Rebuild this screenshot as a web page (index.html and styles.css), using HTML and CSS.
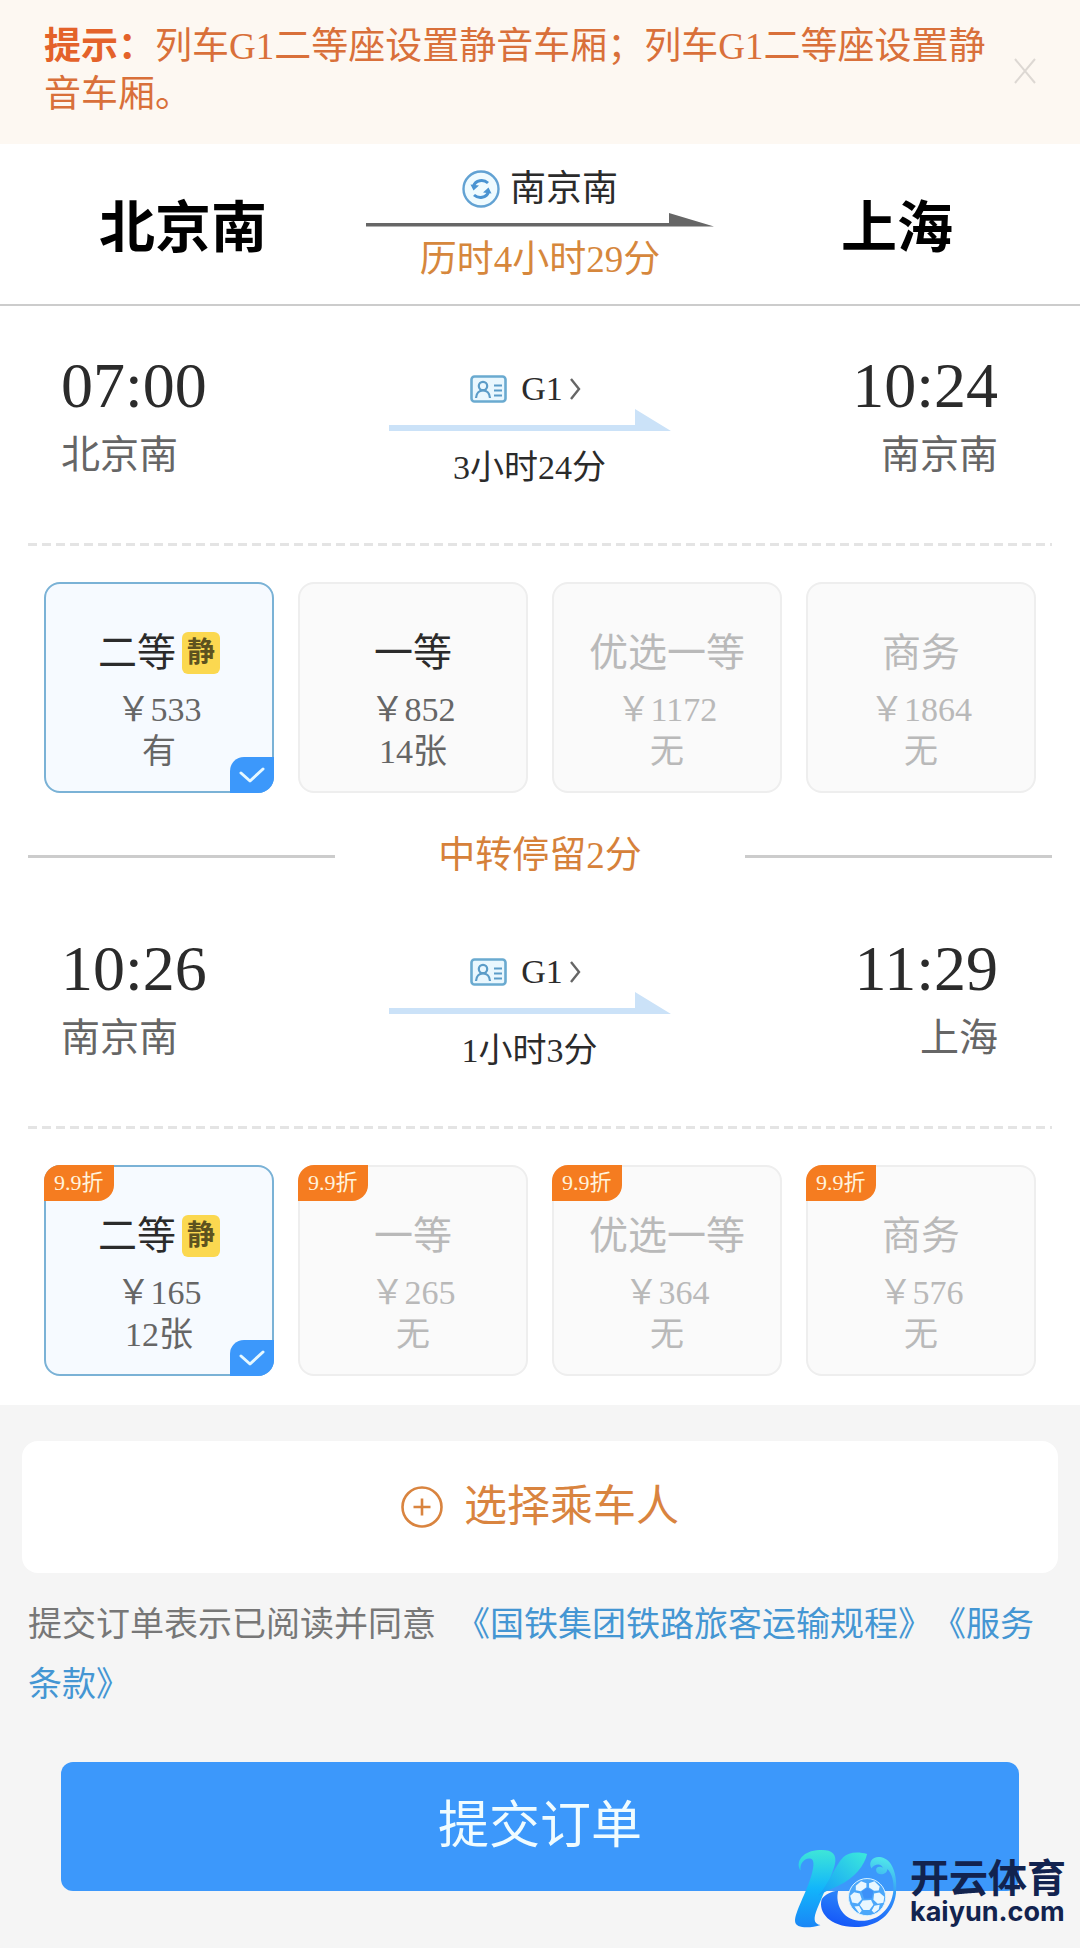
FILE: index.html
```html
<!DOCTYPE html>
<html lang="zh-CN">
<head>
  <meta charset="UTF-8">
  <meta name="viewport" content="width=device-width, initial-scale=1">
  <title>提交订单</title>
  <link rel="stylesheet" href="styles.css">
</head>
<body>
  <!-- shared icons -->
  <svg class="sprite" width="0" height="0">
    <symbol id="id-card" viewBox="0 0 37 28">
      <rect x="1.5" y="1.5" width="34" height="25" rx="3" fill="#e9f7fe" stroke="#6aaad0" stroke-width="2.6"/>
      <circle cx="13" cy="11" r="4.2" fill="none" stroke="#5b9cc8" stroke-width="2.2"/>
      <path d="M6 23c.4-4.500 2.500-7.500 7-7.500s6.600 3 7 7.500" fill="none" stroke="#5b9cc8" stroke-width="2.2"/>
      <path d="M24 10.500h8M24 15.500h8M24 20.500h8" stroke="#5b9cc8" stroke-width="2"/>
    </symbol>
    <symbol id="chevron" viewBox="0 0 12 22">
      <path d="M2 1l8 10-8 10" fill="none" stroke="#666" stroke-width="2.4"/>
    </symbol>
    <symbol id="leg-arrow" viewBox="0 0 282 22">
      <path d="M0 16h246V0l36 22H0z" fill="#cbe2f8"/>
    </symbol>
    <symbol id="tick" viewBox="0 0 26 16">
      <path d="M2 6l9 8L24 2" fill="none" stroke="#e6f8ff" stroke-width="3" stroke-linecap="round" stroke-linejoin="round"/>
    </symbol>
  </svg>

  <div class="notice">
    <p class="notice__text"><strong>提示：</strong>列车G1二等座设置静音车厢；列车G1二等座设置静音车厢。</p>
    <button class="notice__close" type="button" aria-label="关闭">
      <svg width="22" height="26" viewBox="0 0 22 26"><path d="M1 1l20 24M21 1L1 25" stroke="#ddd8d3" stroke-width="2"/></svg>
    </button>
  </div>

  <form class="order">
    <header class="route">
      <h1 class="route__station">北京南</h1>
      <div class="route__middle">
        <div class="route__via">
          <svg width="38" height="38" viewBox="0 0 38 38">
            <circle cx="19" cy="19" r="17.500" fill="#effbff" stroke="#62a2d3" stroke-width="2.400"/>
            <path d="M11.500 16c2-6 10-7 14.500-3" fill="none" stroke="#4a94d2" stroke-width="3"/>
            <path d="M8.500 14.500l8.500 1-5.500 5z" fill="#4a94d2"/>
            <path d="M26.500 22c-2 6-10 7-14.500 3" fill="none" stroke="#4a94d2" stroke-width="3"/>
            <path d="M29.500 23.500l-8.500-1 5.500-5z" fill="#4a94d2"/>
          </svg>
          <span>南京南</span>
        </div>
        <svg class="route__arrow" width="348" height="14" viewBox="0 0 348 14"><path d="M0 10h303V0l45 13.500H0z" fill="#666"/></svg>
        <div class="route__total">历时4小时29分</div>
      </div>
      <h1 class="route__station">上海</h1>
    </header>

    <section class="leg">
      <div class="leg__stop">
        <div class="leg__time">07:00</div>
        <div class="leg__station">北京南</div>
      </div>
      <div class="leg__middle">
        <a class="leg__train" href="#">
          <svg width="37" height="28"><use href="#id-card"/></svg>
          <span>G1</span>
          <svg class="leg__chevron" width="12" height="22"><use href="#chevron"/></svg>
        </a>
        <svg class="leg__arrow" width="282" height="22"><use href="#leg-arrow"/></svg>
        <div class="leg__duration">3小时24分</div>
      </div>
      <div class="leg__stop leg__stop--end">
        <div class="leg__time">10:24</div>
        <div class="leg__station">南京南</div>
      </div>
    </section>

    <div class="dashes"></div>

    <div class="seats">
      <label class="seat">
        <input class="seat__input" type="radio" name="seat1" checked>
        <span class="seat__name">二等<em class="seat__quiet">静</em></span>
        <span class="seat__price">￥533</span>
        <span class="seat__left">有</span>
        <span class="seat__check"><svg width="26" height="16"><use href="#tick"/></svg></span>
      </label>
      <label class="seat">
        <input class="seat__input" type="radio" name="seat1">
        <span class="seat__name">一等</span>
        <span class="seat__price">￥852</span>
        <span class="seat__left">14张</span>
      </label>
      <label class="seat seat--none">
        <input class="seat__input" type="radio" name="seat1" disabled>
        <span class="seat__name">优选一等</span>
        <span class="seat__price">￥1172</span>
        <span class="seat__left">无</span>
      </label>
      <label class="seat seat--none">
        <input class="seat__input" type="radio" name="seat1" disabled>
        <span class="seat__name">商务</span>
        <span class="seat__price">￥1864</span>
        <span class="seat__left">无</span>
      </label>
    </div>

    <div class="transfer">中转停留2分</div>

    <section class="leg">
      <div class="leg__stop">
        <div class="leg__time">10:26</div>
        <div class="leg__station">南京南</div>
      </div>
      <div class="leg__middle">
        <a class="leg__train" href="#">
          <svg width="37" height="28"><use href="#id-card"/></svg>
          <span>G1</span>
          <svg class="leg__chevron" width="12" height="22"><use href="#chevron"/></svg>
        </a>
        <svg class="leg__arrow" width="282" height="22"><use href="#leg-arrow"/></svg>
        <div class="leg__duration">1小时3分</div>
      </div>
      <div class="leg__stop leg__stop--end">
        <div class="leg__time">11:29</div>
        <div class="leg__station">上海</div>
      </div>
    </section>

    <div class="dashes"></div>

    <div class="seats">
      <label class="seat">
        <input class="seat__input" type="radio" name="seat2" checked>
        <span class="seat__discount">9.9折</span>
        <span class="seat__name">二等<em class="seat__quiet">静</em></span>
        <span class="seat__price">￥165</span>
        <span class="seat__left">12张</span>
        <span class="seat__check"><svg width="26" height="16"><use href="#tick"/></svg></span>
      </label>
      <label class="seat seat--none">
        <input class="seat__input" type="radio" name="seat2" disabled>
        <span class="seat__discount">9.9折</span>
        <span class="seat__name">一等</span>
        <span class="seat__price">￥265</span>
        <span class="seat__left">无</span>
      </label>
      <label class="seat seat--none">
        <input class="seat__input" type="radio" name="seat2" disabled>
        <span class="seat__discount">9.9折</span>
        <span class="seat__name">优选一等</span>
        <span class="seat__price">￥364</span>
        <span class="seat__left">无</span>
      </label>
      <label class="seat seat--none">
        <input class="seat__input" type="radio" name="seat2" disabled>
        <span class="seat__discount">9.9折</span>
        <span class="seat__name">商务</span>
        <span class="seat__price">￥576</span>
        <span class="seat__left">无</span>
      </label>
    </div>
  </form>

  <button class="passenger" type="button">
    <svg width="42" height="42" viewBox="0 0 42 42"><g fill="none" stroke="#d9843f" stroke-width="2.600"><circle cx="21" cy="21" r="19.500"/><path d="M12.500 21h17M21 12.500v17"/></g></svg>
    <span>选择乘车人</span>
  </button>

  <p class="terms">提交订单表示已阅读并同意<a class="terms__first" href="#">《国铁集团铁路旅客运输规程》</a><a href="#">《服务条款》</a></p>

  <button class="submit" type="button">提交订单</button>

  <div class="brand">
    <svg width="107" height="83" viewBox="40 50 320 250">
      <defs>
        <linearGradient id="k-left" x1="0" y1="0" x2="0" y2="1"><stop offset="0" stop-color="#3ee6d8"/><stop offset=".5" stop-color="#12b5fb"/><stop offset="1" stop-color="#1a86f6"/></linearGradient>
        <linearGradient id="k-arm" x1="1" y1="0" x2="0" y2="1"><stop offset="0" stop-color="#3beadb"/><stop offset="1" stop-color="#149bfb"/></linearGradient>
        <linearGradient id="k-swoosh" x1=".7" y1="0" x2=".4" y2="1"><stop offset="0" stop-color="#4fe3ea"/><stop offset=".5" stop-color="#2f8dfa"/><stop offset="1" stop-color="#1659f8"/></linearGradient>
      </defs>
      <path d="M62 118C46 98 62 62 110 57c42-5 63 8 55 43-7 28-34 88-53 132-12 30-12 46 10 50-30 10-77 12-77-12 0-28 34-84 50-140 8-28 8-46-4-48-18-3-33 16-29 36z" fill="url(#k-left)"/>
      <path d="M190 78c15-16 45-18 72-10-7 34-38 72-85 95-18 9-42 18-62 30 32-34 50-90 75-115z" fill="url(#k-arm)"/>
      <path d="M125 205c8-14 30-25 50-27-10 40 12 86 62 91 58 4 98-36 104-89 3-28-4-54-18-67 0 19-33 22-34 3 0-10 14-13 20-5-2-15-24-15-34 1-13-24 12-44 40-30 30 15 38 62 34 105-8 60-52 101-124 101-77-2-110-44-100-83z" fill="url(#k-swoosh)"/>
      <circle cx="262" cy="198" r="56" fill="#4ba7fa" stroke="#d9f2ff" stroke-width="3"/>
      <path d="M246 181l17-11 18 10-5 22-23 1z" fill="#3d91f8"/>
      <path d="M228 164l16-14 16 6v12l-17 12-15-3zM268 156l16-6 16 16-3 12-14 1-15-10zM211 194l12-11 17 4 6 17-12 13-17-3zM283 187l16-3 15 13-3 18-17 3-13-12zM249 208l25-1 7 14-12 16h-18l-11-15zM224 226l14-1 8 14-7 8zM284 224l16-3-3 14-14 11-7-8z" fill="#e9f7ff"/>
    </svg>
    <div class="brand__text">
      <div class="brand__name">开云体育</div>
      <div class="brand__site">kaiyun.com</div>
    </div>
  </div>
</body>
</html>
```

FILE: styles.css
```css
html {
  box-sizing: border-box;
}

*, *:before, *:after {
  box-sizing: inherit;
}

body {
  margin: 0;
  position: relative;
  background: #f5f5f5;
  color: #2b2b2b;
  font-family: "Liberation Serif", "Noto Sans CJK SC", serif;
}

button {
  border: 0;
  padding: 0;
  font-family: inherit;
  cursor: pointer;
}

a {
  color: inherit;
  text-decoration: none;
}

svg {
  display: block;
}

.sprite {
  position: absolute;
}

/* notice bar */
.notice {
  display: flex;
  align-items: center;
  justify-content: space-between;
  padding: 23px 44px 25px;
  background: #fdf8f2;
}

.notice__text {
  margin: 0;
  max-width: 944px;
  font-size: 37px;
  line-height: 48px;
  color: #d9703a;
}

.notice__text strong {
  color: #e4622a;
}

.notice__close {
  background: none;
}

/* whole journey */
.order {
  padding-bottom: 29px;
  background: #fff;
}

.route {
  display: grid;
  grid-template-columns: 1fr 348px 1fr;
  align-items: center;
  border-bottom: 2px solid #ccc;
  text-align: center;
}

.route__station {
  margin: 0;
  padding-top: 8px;
  font-size: 56px;
  line-height: 64px;
  color: #000;
}

.route__middle {
  padding: 23px 0 22px;
}

.route__via {
  display: flex;
  align-items: center;
  justify-content: center;
  gap: 10px;
  font-size: 36px;
  line-height: 44px;
}

.route__arrow {
  margin: 2px 0 11px;
}

.route__total {
  font-size: 37px;
  line-height: 44px;
  color: #d6873c;
}

/* one train */
.leg {
  display: grid;
  grid-template-columns: 1fr auto 1fr;
  padding: 44px 82px 55px 61px;
}

.leg__stop--end {
  text-align: right;
}

.leg__time {
  font-size: 64px;
  line-height: 72px;
}

.leg__station {
  margin-top: 9px;
  font-size: 39px;
  line-height: 48px;
  color: #666;
}

.leg__middle {
  padding-top: 19px;
  text-align: center;
}

.leg__train {
  display: flex;
  align-items: center;
  justify-content: center;
  gap: 14px;
  font-size: 34px;
  line-height: 40px;
}

.leg__chevron {
  margin: 0 8px 0 -8px;
}

.leg__arrow {
  margin-bottom: 17px;
}

.leg__duration {
  font-size: 34px;
  line-height: 40px;
}

.dashes {
  height: 3px;
  margin: 0 28px;
  background: repeating-linear-gradient(to right, #e4e4e4 0, #e4e4e4 9px, #fff 9px, #fff 14px);
}

/* seat classes */
.seats {
  display: grid;
  grid-template-columns: repeat(4, 1fr);
  gap: 24px;
  padding: 36px 44px 0;
}

.seat {
  position: relative;
  display: flex;
  flex-direction: column;
  align-items: center;
  padding: 45px 0 18px;
  border: 2px solid #eee;
  border-radius: 16px;
  background: #fafafa;
  color: #666;
  cursor: pointer;
}

.seat:has(:checked) {
  border-color: #7ab2d6;
  background: #f6faff;
}

.seat__input {
  position: absolute;
  margin: 0;
  opacity: 0;
}

.seat__name {
  display: flex;
  align-items: center;
  gap: 6px;
  margin-bottom: 12px;
  font-size: 39px;
  line-height: 48px;
  color: #2b2b2b;
}

.seat__quiet {
  width: 38px;
  border-radius: 6px;
  background: #fbd850;
  font-size: 28px;
  font-style: normal;
  font-weight: bold;
  line-height: 42px;
  text-align: center;
  color: #5d521f;
}

.seat__price,
.seat__left {
  font-size: 34px;
  line-height: 42px;
}

.seat--none,
.seat--none .seat__name {
  color: #b9b9b9;
  cursor: default;
}

.seat__check {
  position: absolute;
  right: -2px;
  bottom: -2px;
  display: flex;
  align-items: center;
  justify-content: center;
  width: 44px;
  height: 36px;
  border-radius: 14px 0;
  border-bottom-right-radius: 16px;
  background: #3c98fb;
}

.seat__discount {
  position: absolute;
  top: -2px;
  left: -2px;
  padding: 0 10px;
  border-radius: 16px 0;
  background: #f57c20;
  font-size: 22px;
  line-height: 36px;
  color: #fff3dc;
}

.transfer {
  display: flex;
  align-items: center;
  justify-content: space-between;
  margin: 39px 28px 9px;
  font-size: 37px;
  line-height: 48px;
  color: #d6813a;
}

.transfer:before,
.transfer:after {
  content: "";
  width: 30%;
  height: 3px;
  background: #ccc;
}

/* passenger, terms, submit */
.passenger {
  display: flex;
  align-items: center;
  justify-content: center;
  gap: 21px;
  width: calc(100% - 44px);
  margin: 36px 22px 22px;
  padding: 36px 0;
  border-radius: 16px;
  background: #fff;
  font-size: 43px;
  line-height: 60px;
  color: #d9843f;
}

.terms {
  margin: 0 30px 47px 28px;
  font-size: 34px;
  line-height: 60px;
  text-spacing-trim: space-all;
  color: #777;
}

.terms a {
  color: #4496d3;
}

.terms .terms__first {
  margin-left: 20px;
}

.submit {
  display: block;
  width: calc(100% - 122px);
  margin: 0 auto 58px;
  padding: 32px 0;
  border-radius: 12px;
  background: #3c98fb;
  font-size: 51px;
  line-height: 65px;
  color: #f0fcff;
}

/* brand mark over the page corner */
.brand {
  position: absolute;
  right: 14px;
  bottom: 18px;
  display: flex;
  align-items: center;
  gap: 10px;
  color: #12234f;
  font-weight: bold;
}

.brand__name {
  font-family: "Noto Sans CJK SC", sans-serif;
  font-size: 39px;
  line-height: 44px;
}

.brand__site {
  font-family: Inter, sans-serif;
  font-size: 27px;
  line-height: 30px;
}
```
